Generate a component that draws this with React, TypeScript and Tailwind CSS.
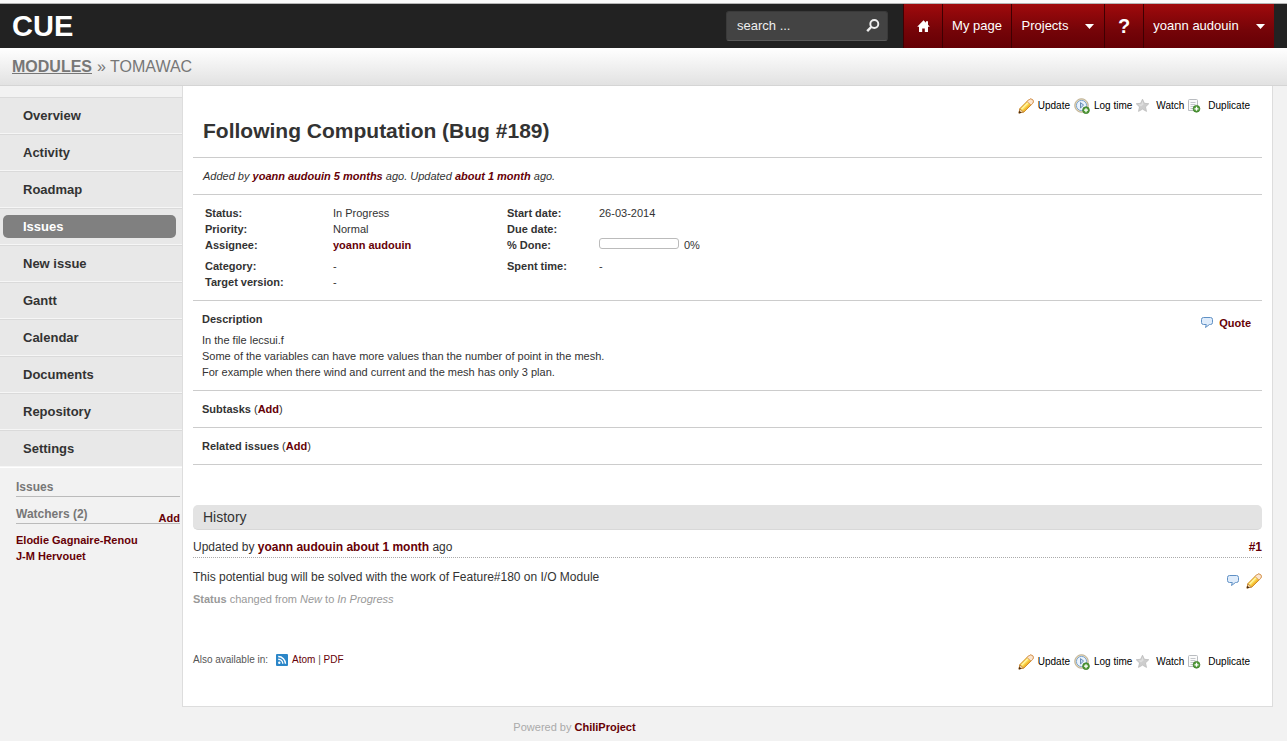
import React from "react";

const FONT = "font-['Liberation_Sans',Arial,sans-serif]";
const LINK = "font-bold text-[#660006] hover:underline";

function PencilIcon() {
  return (
    <svg width="16" height="16" viewBox="0 0 16 16" aria-hidden="true" className="shrink-0">
      <path d="M1 14.9 1.9 10.6 10.4 2.1Q12.4.2 14.6 1.6 16.2 3.6 14.5 5.6L6 13.9Z" fill="#fbd64a" stroke="#cf8a26" />
      <path d="M10.4 2.1Q12.4.2 14.6 1.6 16.2 3.6 14.5 5.6L13 7 9 3.5Z" fill="#fbe6cf" stroke="#d4935a" strokeWidth=".8" />
      <path d="M3.5 11.2 9.8 4.9" stroke="#fff3a0" strokeWidth="1.6" />
      <path d="M5.6 12.9 12 6.6" stroke="#efb02c" strokeWidth="1.1" />
      <path d="M1 15 1.9 10.9 5.5 14Z" fill="#f4d8a8" stroke="#b57632" strokeWidth=".7" />
      <path d="M.6 15.5 1.3 12.7 3.6 14.8Z" fill="#4a2c12" />
    </svg>
  );
}

function PlusBadge({ cx, cy }: { cx: number; cy: number }) {
  return (
    <g>
      <circle cx={cx} cy={cy} r="3.4" fill="#4f9a35" stroke="#3a7a28" strokeWidth=".7" />
      <path d={`M${cx - 2} ${cy}h4M${cx} ${cy - 2}v4`} stroke="#fff" strokeWidth="1.3" />
    </g>
  );
}

function ClockIcon() {
  return (
    <svg width="16" height="16" viewBox="0 0 16 16" aria-hidden="true" className="shrink-0">
      <circle cx="7.5" cy="7.5" r="6.8" fill="#e4d6b8" stroke="#b8aa8c" strokeWidth=".9" />
      <circle cx="7.5" cy="7.5" r="5.1" fill="#eaf3fd" stroke="#7aa7d6" />
      <path d="M6.5 4.6v5.4L9.6 7Z" fill="#c4dcf4" stroke="#5f83ad" strokeWidth=".9" />
      <PlusBadge cx={12} cy={12.2} />
    </svg>
  );
}

function StarIcon() {
  return (
    <svg width="16" height="16" viewBox="0 0 16 16" aria-hidden="true" className="shrink-0">
      <path d="M6.5 1.2 8.4 5.3 12.8 5.7 9.5 8.9 10.5 13.4 6.5 11.1 2.5 13.4 3.5 8.9.2 5.7 4.6 5.3Z" fill="#cdcdcd" stroke="#bcbcbc" strokeWidth=".8" />
      <path d="M6.5 3 7.6 6.4 5 8.5 2.2 6.6 5.3 6.3Z" fill="#dedede" />
    </svg>
  );
}

function DuplicateIcon() {
  return (
    <svg width="16" height="16" viewBox="0 0 16 16" aria-hidden="true" className="shrink-0">
      <path d="M.5 2.5Q.5 1.5 1.5 1.5H8.5Q9.5 1.5 9.5 2.5V12.5H.5Z" fill="#fbfbfb" stroke="#b9bcc0" />
      <path d="M2.5 4.5h5M2.5 6.5h5M2.5 8.5h4M2.5 10.5h3" stroke="#c3c6cb" />
      <PlusBadge cx={8.5} cy={10.8} />
    </svg>
  );
}

function CommentIcon() {
  return (
    <svg width="16" height="16" viewBox="0 0 16 16" aria-hidden="true" className="shrink-0">
      <path d="M3.5 2.5H10.5Q12.5 2.5 12.5 4.5V7.5Q12.5 9.5 10.5 9.5H9.5L5.5 12.5 6.3 9.5H3.5Q1.5 9.5 1.5 7.5V4.5Q1.5 2.5 3.5 2.5Z" fill="#dfecfb" stroke="#5f90c4" />
    </svg>
  );
}

function FeedIcon() {
  return (
    <svg width="12" height="12" viewBox="0 0 12 12" aria-hidden="true" className="shrink-0">
      <rect width="12" height="12" rx="1" fill="#2b86c8" />
      <circle cx="3.3" cy="8.7" r="1.2" fill="#fff" />
      <path d="M2.2 5.2a4.6 4.6 0 0 1 4.6 4.6M2.2 2.5a7.3 7.3 0 0 1 7.3 7.3" fill="none" stroke="#fff" strokeWidth="1.4" />
    </svg>
  );
}

function HomeIcon() {
  return (
    <svg width="13" height="12" viewBox="0 0 13 12" aria-hidden="true">
      <path d="M6.5.3 9 2.8V1.2h2v3.6l1.8 1.9H11V12H7.8V8.5H5.2V12H2V6.7H.2Z" fill="#fff" />
    </svg>
  );
}

function Caret() {
  return (
    <svg width="9" height="5" viewBox="0 0 9 5" aria-hidden="true">
      <path d="M0 0h9L4.5 5Z" fill="#fff" />
    </svg>
  );
}

const NAV = "flex items-center justify-center border-l border-[#3f0002] bg-linear-to-b from-[#a00a0c] from-0% via-[#750408] via-60% to-[#650005] text-[13px] text-white";

function TopBar() {
  return (
    <header className="flex h-[45px] items-stretch border-t border-[#b5b5b5] bg-[#222] pr-[13px]">
      <h1 className="flex items-center pl-3 text-[29px] leading-none font-bold text-white">CUE</h1>
      <form className="mr-[15px] ml-auto flex items-center" onSubmit={(e) => e.preventDefault()}>
        <div className="mb-px flex h-[30px] w-[162px] items-center rounded-[3px] border border-[#3a3a3a] border-b-[#5a5a5a] bg-[#434343] pr-[7px] pl-[10px]">
          <input aria-label="Search" placeholder="search ..." className="h-full w-0 flex-1 bg-transparent text-[13px] text-white outline-none placeholder:text-[#eee]" />
          <button type="submit" aria-label="Submit search">
            <svg width="14" height="14" viewBox="0 0 14 14" aria-hidden="true">
              <circle cx="8.3" cy="5" r="4" fill="none" stroke="#eee" strokeWidth="1.9" />
              <path d="M5.2 8 1.2 12.2" stroke="#eee" strokeWidth="2.4" />
            </svg>
          </button>
        </div>
      </form>
      <nav className="flex items-stretch">
        <a href="#home" aria-label="Home" className={`${NAV} w-[39px]`}><HomeIcon /></a>
        <a href="#my-page" className={`${NAV} w-[69px]`}>My page</a>
        <button type="button" className={`${NAV} w-[93px] gap-[17px]`}>Projects<Caret /></button>
        <a href="#help" className={`${NAV} w-[39px]`}><span className="text-xl font-bold">?</span></a>
        <button type="button" className={`${NAV} w-[131px] gap-[17px]`}>yoann audouin<Caret /></button>
      </nav>
    </header>
  );
}

const MENU = ["Overview", "Activity", "Roadmap", "Issues", "New issue", "Gantt", "Calendar", "Documents", "Repository", "Settings"];

function Sidebar() {
  return (
    <aside className="w-[182px] shrink-0 pt-[11px]">
      <ul className="border-b border-white">
        {MENU.map((item) => (
          <li key={item} className="flex h-[37px] items-center border-t border-b border-t-[#dadada] border-b-[#f6f6f6] bg-[#e8e8e8] pr-[6px] pl-[3px]">
            <a
              href={`#${item}`}
              className={`flex h-[23px] flex-1 items-center rounded-[5px] pl-5 text-[13px] font-bold ${item === "Issues" ? "bg-[#808080] text-white" : "text-[#333]"}`}
            >
              {item}
            </a>
          </li>
        ))}
      </ul>
      <div className="pt-[11px] pr-[2px] pl-4">
        <h3 className="border-b border-[#bbb] text-xs leading-[17px] font-bold text-[#777]">Issues</h3>
        <div className="mt-2 flex justify-between border-b border-[#bbb]">
          <h3 className="text-xs leading-[18px] font-bold text-[#777]">Watchers (2)</h3>
          <a href="#add-watcher" className={`${LINK} self-end text-[11px] leading-[10px]`}>Add</a>
        </div>
        <ul className="mt-2 text-[11px] leading-4">
          <li><a href="#elodie" className={LINK}>Elodie Gagnaire-Renou</a></li>
          <li><a href="#hervouet" className={LINK}>J-M Hervouet</a></li>
        </ul>
      </div>
    </aside>
  );
}

function Actions() {
  return (
    <div className="flex items-center justify-end gap-1 pr-3 text-[10px] leading-4 text-black">
      <a href="#update" className="flex gap-1"><PencilIcon />Update</a>
      <a href="#log-time" className="flex gap-1"><ClockIcon />Log time</a>
      <a href="#watch" className="flex gap-1"><StarIcon />Watch</a>
      <a href="#duplicate" className="flex gap-1"><DuplicateIcon />Duplicate</a>
    </div>
  );
}

const TH = "p-0 text-left align-top font-bold";
const TD = "p-0 align-top";

function Attributes() {
  return (
    <table className="ml-3 table-fixed border-collapse text-[11px] leading-4">
      <colgroup>
        <col className="w-32" />
        <col className="w-[174px]" />
        <col className="w-[92px]" />
        <col className="w-40" />
      </colgroup>
      <tbody>
        <tr><th className={TH}>Status:</th><td className={TD}>In Progress</td><th className={TH}>Start date:</th><td className={TD}>26-03-2014</td></tr>
        <tr><th className={TH}>Priority:</th><td className={TD}>Normal</td><th className={TH}>Due date:</th><td className={TD} /></tr>
        <tr>
          <th className={TH}>Assignee:</th>
          <td className={TD}><a href="#yoann" className={LINK}>yoann audouin</a></td>
          <th className={TH}>% Done:</th>
          <td className={TD}>
            <div className="flex h-[21px] items-start gap-[5px]">
              <span role="progressbar" aria-label="% Done" aria-valuenow={0} className="mt-px h-[11px] w-20 rounded-[3px] border border-[#bbb]" />
              <span>0%</span>
            </div>
          </td>
        </tr>
        <tr><th className={TH}>Category:</th><td className={TD}>-</td><th className={TH}>Spent time:</th><td className={TD}>-</td></tr>
        <tr><th className={TH}>Target version:</th><td className={TD}>-</td><th /><td /></tr>
      </tbody>
    </table>
  );
}

const RULE = "border-t border-[#ccc]";

function Issue() {
  return (
    <main className="min-w-0 flex-1 border-x border-b border-[#ddd] bg-white px-[10px] pt-3 pb-9">
      <Actions />
      <h2 className="mt-[3px] pb-[13px] pl-[10px] text-[21px] leading-[27px] font-bold">Following Computation (Bug #189)</h2>
      <p className={`${RULE} py-[10px] pl-[10px] text-[11px] leading-4 italic`}>
        Added by <a href="#yoann" className={LINK}>yoann audouin</a> <a href="#activity" className={LINK}>5 months</a> ago. Updated <a href="#activity" className={LINK}>about 1 month</a> ago.
      </p>
      <section className={`${RULE} pt-[10px] pb-[10px]`}>
        <Attributes />
      </section>
      <section className={`${RULE} flex items-start justify-between pt-[10px] pr-[11px] pb-[10px] pl-[9px] text-[11px] leading-4`}>
        <div>
          <h3 className="mb-[5px] font-bold">Description</h3>
          <p>In the file lecsui.f<br />Some of the variables can have more values than the number of point in the mesh.<br />For example when there wind and current and the mesh has only 3 plan.</p>
        </div>
        <a href="#quote" className={`${LINK} mt-1 flex gap-[3px]`}><CommentIcon />Quote</a>
      </section>
      <section className={`${RULE} py-[10px] pl-[9px] text-[11px] leading-4`}>
        <strong>Subtasks</strong> (<a href="#add-subtask" className={LINK}>Add</a>)
      </section>
      <section className={`${RULE} border-b py-[10px] pl-[9px] text-[11px] leading-4`}>
        <strong>Related issues</strong> (<a href="#add-related" className={LINK}>Add</a>)
      </section>
      <h3 className="mt-10 rounded-[5px] border-b border-[#d8d8d8] bg-[#e3e3e3] pl-[10px] text-sm leading-6">History</h3>
      <div className="mt-2 flex justify-between border-b border-dotted border-[#aaa] text-xs leading-[19px]">
        <p>Updated by <a href="#yoann" className={LINK}>yoann audouin</a> <a href="#activity" className={LINK}>about 1 month</a> ago</p>
        <a href="#note-1" className={LINK}>#1</a>
      </div>
      <div className="mt-[11px] flex items-start justify-between">
        <p className="text-xs leading-4">This potential bug will be solved with the work of Feature#180 on I/O Module</p>
        <div className="mt-1 flex gap-1">
          <button type="button" aria-label="Quote"><CommentIcon /></button>
          <button type="button" aria-label="Edit"><PencilIcon /></button>
        </div>
      </div>
      <p className="mt-[2px] text-[11px] leading-4 text-[#999]">
        <strong>Status</strong> changed from <i>New</i> to <i>In Progress</i>
      </p>
      <div className="mt-[45px] flex items-start justify-between">
        <p className="flex items-center gap-1 text-[10px] leading-4 text-[#555]">
          <span className="pr-1">Also available in:</span><FeedIcon />
          <span><a href="#atom" className="text-[#660006]">Atom</a> | <a href="#pdf" className="text-[#660006]">PDF</a></span>
        </p>
        <div className="pt-[2px]">
          <Actions />
        </div>
      </div>
    </main>
  );
}

export default function App() {
  return (
    <div className={`${FONT} flex min-h-screen flex-col border-t-[3px] border-t-[#fafafa] bg-[#f2f2f2] text-[#333]`}>
      <TopBar />
      <div className="flex h-[38px] items-center gap-[5px] border-b border-[#d5d5d5] bg-linear-to-b from-white to-[#e2e2e2] pt-px pl-3 text-base text-[#777]">
        <a href="#modules" className="font-bold underline">MODULES</a>
        <span>» TOMAWAC</span>
      </div>
      <div className="flex pr-[14px]">
        <Sidebar />
        <Issue />
      </div>
      <footer className="pt-3 pr-[138px] text-center text-[11px] leading-4 text-[#aaa]">
        Powered by <a href="#chiliproject" className={LINK}>ChiliProject</a>
      </footer>
    </div>
  );
}
